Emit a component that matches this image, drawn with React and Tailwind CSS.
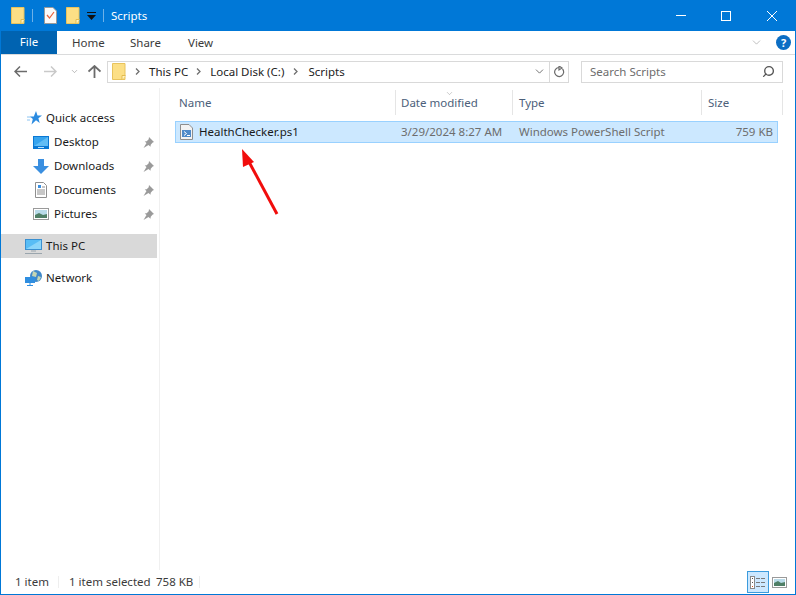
import { ChevronDown, Search } from 'lucide-react'

const FolderIcon = ({ className = '' }) => (
  <svg className={className} width="14" height="17" viewBox="0 0 14 17">
    <path d="M.5.5h12.500v16H.5z" fill="#fcdf85" stroke="#e8c35c" />
    <path d="M10 16.500v-4h3.500" fill="#fff3c4" stroke="#e3bb4e" />
  </svg>
)

const Crumb = ({ className = '' }) => (
  <svg className={className} width="5" height="7" viewBox="0 0 5 7">
    <path d="M1 .5l3 3-3 3" fill="none" stroke="#6f6f6f" strokeWidth="1.300" />
  </svg>
)

const Pin = () => (
  <svg width="11" height="11" viewBox="0 0 11 11" className="ml-auto mr-[3px]">
    <path d="M6 0l5 5-1.300.6-2 2.200-.2 2L5.500 8 .5 11l3-5-1.800-1.500 2-.2 2-2z" fill="#9a9a9a" />
  </svg>
)

const Star = () => (
  <svg width="15" height="14" viewBox="0 0 15 14">
    <path d="M9 0l1.500 4.500H15l-3.600 2.800 1.300 4.700L9 9.200 4.500 13.500l1.300-5.600L3 5.500h3.800z" fill="#2b8be0" />
    <path d="M0 6h4M0 9h3" stroke="#8cc4f2" />
  </svg>
)

const DesktopIcon = () => (
  <svg width="16" height="13" viewBox="0 0 16 13">
    <rect width="16" height="13" fill="#0a78d4" />
    <path d="M1 1h14v9H1z" fill="#37a4ee" />
    <path d="M1 10L15 1v9z" fill="#62bdf5" />
    <path d="M5 11.500h6" stroke="#bfe2fa" />
  </svg>
)

const DownloadIcon = () => (
  <svg width="16" height="15" viewBox="0 0 16 15">
    <path d="M5 0h6v7h5l-8 8-8-8h5z" fill="#3a8fe0" />
  </svg>
)

const DocumentIcon = () => (
  <svg width="12" height="16" viewBox="0 0 12 16">
    <path d="M.5.5h8l3 3v12H.5z" fill="#fff" stroke="#8f8f8f" />
    <path d="M3 3h3v3H3z" fill="#3a8fe0" />
    <path d="M7 5h3M2 8h8M2 10h8M2 12h8" stroke="#8f8f8f" />
  </svg>
)

const PictureIcon = () => (
  <svg width="16" height="12" viewBox="0 0 16 12">
    <rect x=".5" y=".5" width="15" height="11" fill="#fff" stroke="#9a9a9a" />
    <rect x="2" y="2" width="12" height="8" fill="#b9dbe9" />
    <path d="M2 7l4-2 4 2 4-1v4H2z" fill="#4f7f66" />
  </svg>
)

const PcIcon = () => (
  <svg width="17" height="15" viewBox="0 0 17 15">
    <rect x=".5" y=".5" width="16" height="10" fill="#58bdf5" stroke="#3a8fd0" />
    <path d="M1 10L16 1v9z" fill="#8ad5fa" />
    <path d="M6 12h5M0 14.500h17" stroke="#9aa5ad" />
  </svg>
)

const NetworkIcon = () => (
  <svg width="17" height="16" viewBox="0 0 17 16">
    <circle cx="11" cy="6" r="6" fill="#3f88c9" />
    <path d="M8 1l4 2-1 4-4-1zM13 6l3 1-2 4-2-1z" fill="#c4d6b4" />
    <rect x="0" y="7" width="10" height="6" fill="#2f8ee0" />
    <path d="M5 13v2M2 15.500h6" stroke="#2f8ee0" />
  </svg>
)

const ScriptIcon = () => (
  <svg width="13" height="16" viewBox="0 0 13 16">
    <path d="M.5.5h8.500l3.500 3.500v11.500H.5z" fill="#f3f3f3" stroke="#8e8e8e" />
    <rect x="2" y="6" width="9" height="7" fill="#4f8ac9" />
    <path d="M4 7.500l2.500 2L4 11.500M7 11.500h3" stroke="#fff" fill="none" />
  </svg>
)

const navItem = 'h-6 flex items-center'

export default function App() {
  return (
    <div className="w-[796px] h-[595px] flex flex-col bg-white border-x border-b border-[#0078d7] overflow-hidden relative text-[11.5px] text-[#1a1a1a] font-['Noto_Sans',sans-serif] leading-none whitespace-nowrap">
      {/* Title bar */}
      <div className="h-[31px] shrink-0 bg-[#0078d7] flex items-center text-white -mx-px px-[11px]">
        <FolderIcon />
        <span className="w-px h-[13px] bg-[#6db1e8] ml-[7px]" />
        <svg width="13" height="17" viewBox="0 0 13 17" className="ml-[11px]">
          <path d="M.5.5h8.500l3.500 3.500v12.500H.5z" fill="#fafafa" stroke="#9a9a9a" />
          <path d="M3 8l2.500 3L10 5" fill="none" stroke="#e8623c" strokeWidth="1.200" />
        </svg>
        <FolderIcon className="ml-[9px]" />
        <svg width="9" height="9" viewBox="0 0 9 9" className="ml-[7px] mt-[2px]">
          <path d="M0 0h9v1H0zM0 3h9L4.500 8z" fill="#111" />
        </svg>
        <span className="w-px h-[13px] bg-[#6db1e8] ml-[7px]" />
        <span className="ml-[7px]">Scripts</span>
        <div className="ml-auto flex items-center mr-[8px]">
          <span className="w-[10px] h-px bg-white" />
          <span className="w-[10px] h-[10px] border border-white ml-[35px]" />
          <svg width="10" height="10" viewBox="0 0 10 10" className="ml-[36px]">
            <path d="M0 0l10 10M10 0L0 10" stroke="#fff" />
          </svg>
        </div>
      </div>

      {/* Ribbon tabs */}
      <div className="h-6 shrink-0 flex items-center border-b border-[#dadbdc] text-[#3b3b3b]">
        <div className="w-[56px] h-full -mt-px bg-[#0063b1] text-white flex items-center justify-center">File</div>
        <span className="ml-[15px] w-[58px]">Home</span>
        <span className="w-[58px]">Share</span>
        <span>View</span>
        <ChevronDown size={13} strokeWidth={1} className="ml-auto text-[#8a8a8a] mr-[4px]" />
        <span className="w-[15px] h-[15px] rounded-full bg-[#0c6ec4] text-white font-bold text-[11px] flex items-center justify-center ml-[9px] mr-[4px]">?</span>
      </div>

      {/* Address row */}
      <div className="h-[33px] shrink-0 flex items-center">
        <svg width="13" height="11" viewBox="0 0 13 11" className="ml-[13px]">
          <path d="M6 .5L1 5.500l5 5M1 5.500h12" fill="none" stroke="#6b6b6b" strokeWidth="1.500" />
        </svg>
        <svg width="13" height="11" viewBox="0 0 13 11" className="ml-[17px]">
          <path d="M7 .5l5 5-5 5M12 5.500H0" fill="none" stroke="#c9c9c9" strokeWidth="1.500" />
        </svg>
        <ChevronDown size={9} strokeWidth={1.500} className="ml-[13px] text-[#8a8a8a]" />
        <svg width="13" height="13" viewBox="0 0 13 13" className="ml-[9px]">
          <path d="M.5 6.500l6-5.500 6 5.500M6.500 1v12" fill="none" stroke="#6b6b6b" strokeWidth="1.800" />
        </svg>
        <div className="ml-[6px] w-[462px] h-[22px] border border-[#d9d9d9] flex items-center text-[#222]">
          <FolderIcon className="ml-[4px]" />
          <Crumb className="ml-[9px]" />
          <span className="ml-[9px]">This PC</span>
          <Crumb className="ml-[8px]" />
          <span className="ml-[9px]">Local Disk (C:)</span>
          <Crumb className="ml-[9px]" />
          <span className="ml-[10px]">Scripts</span>
          <ChevronDown size={13} strokeWidth={1.500} className="ml-auto text-[#555] mr-[3px]" />
          <span className="w-px h-full bg-[#d9d9d9]" />
          <svg width="12" height="12" viewBox="0 0 12 12" className="mx-[3px]">
            <path d="M9.500 3A4.500 4.500 0 1 1 6 1.500M6 0v4l3-2z" fill="none" stroke="#6b6b6b" strokeWidth="1.200" />
          </svg>
        </div>
        <div className="ml-[12px] w-[202px] h-[22px] border border-[#d9d9d9] flex items-center pl-[8px] pr-[7px] text-[#6d6d6d]">
          Search Scripts
          <Search size={13} strokeWidth={2.500} className="ml-auto -scale-x-100 text-[#555]" />
        </div>
      </div>

      {/* Body */}
      <div className="flex-1 flex min-h-0">
        <nav className="w-[159px] shrink-0 border-r border-[#f0f0f0] pt-[18px]">
          <div className={`${navItem} pl-[26px] gap-[4px]`}><Star />Quick access</div>
          <div className={`${navItem} pl-[32px] gap-[5px] pr-[2px]`}><DesktopIcon />Desktop<Pin /></div>
          <div className={`${navItem} pl-[32px] gap-[5px] pr-[2px]`}><DownloadIcon />Downloads<Pin /></div>
          <div className={`${navItem} pl-[34px] gap-[7px] pr-[2px]`}><DocumentIcon />Documents<Pin /></div>
          <div className={`${navItem} pl-[32px] gap-[5px] pr-[2px]`}><PictureIcon />Pictures<Pin /></div>
          <div className={`${navItem} pl-[24px] gap-[4px] mt-2 mr-[2px] bg-[#d9d9d9]`}><PcIcon />This PC</div>
          <div className={`${navItem} pl-[24px] gap-[4px] mt-2`}><NetworkIcon />Network</div>
        </nav>

        <main className="flex-1 min-w-0 pl-[15px]">
          <div className="h-[25px] mt-[2px] flex text-[#4c607a] relative">
            <div className="w-[221px] pl-[4px] flex items-center border-r border-[#e5e5e5]">Name</div>
            <div className="w-[117px] pl-[5px] flex items-center border-r border-[#e5e5e5]">Date modified</div>
            <div className="w-[189px] pl-[6px] flex items-center border-r border-[#e5e5e5]">Type</div>
            <div className="w-[81px] pl-[6px] flex items-center border-r border-[#e5e5e5]">Size</div>
            <ChevronDown size={9} strokeWidth={1} className="absolute left-[270px] -top-[1px] text-[#7a7a7a]" />
          </div>
          <div className="h-[22px] w-[603px] mt-[6px] bg-[#cce8ff] border border-[#99d1ff] flex items-center text-[#6d6d6d]">
            <span className="ml-[4px]"><ScriptIcon /></span>
            <span className="w-[202px] ml-[6px] text-[#1a1a1a]">HealthChecker.ps1</span>
            <span className="w-[118px]">3/29/2024 8:27 AM</span>
            <span className="w-[183px]">Windows PowerShell Script</span>
            <span className="w-[71px] text-right">759 KB</span>
          </div>
        </main>
      </div>

      {/* Status bar */}
      <div className="h-[24px] shrink-0 flex items-center text-[#3b3b3b]">
        <span className="ml-[14px] w-[43px]">1 item</span>
        <span className="w-px h-[12px] bg-[#eeeeee]" />
        <span className="ml-[10px] w-[87px]">1 item selected</span>
        <span className="w-[43px]">758 KB</span>
        <span className="w-px h-[12px] bg-[#eeeeee]" />
        <div className="ml-auto flex items-center mr-[8px]">
          <span className="w-[22px] h-[22px] bg-[#cce8ff] border border-[#3c9bdc] flex items-center justify-center">
            <svg width="16" height="13" viewBox="0 0 16 13">
              <rect x=".5" y=".5" width="4" height="12" fill="#fff" stroke="#8a8a8a" />
              <path d="M2 2.500h1M2 6.500h1" stroke="#555" />
              <path d="M2 10.500h1" stroke="#d4561e" />
              <path d="M6 2.500h4M11 2.500h4M6 6.500h4M11 6.500h4M6 10.500h4M11 10.500h4" stroke="#7a7a7a" />
            </svg>
          </span>
          <span className="ml-[3px]"><svg width="15" height="11" viewBox="0 0 15 11">
            <rect x=".5" y=".5" width="14" height="10" fill="#fff" stroke="#9a9a9a" />
            <rect x="2" y="2" width="11" height="7" fill="#b9dbe9" />
            <path d="M2 6l4-2 3 2 4-1v4H2z" fill="#4f7f66" />
          </svg></span>
        </div>
      </div>

      {/* Annotation arrow */}
      <svg className="absolute left-0 top-0 pointer-events-none" width="796" height="595" viewBox="0 0 796 595">
        <path d="M276 214L247 160" stroke="#f10d0c" strokeWidth="3" />
        <path d="M241 149L253 162 242 167z" fill="#f10d0c" />
      </svg>
    </div>
  )
}
